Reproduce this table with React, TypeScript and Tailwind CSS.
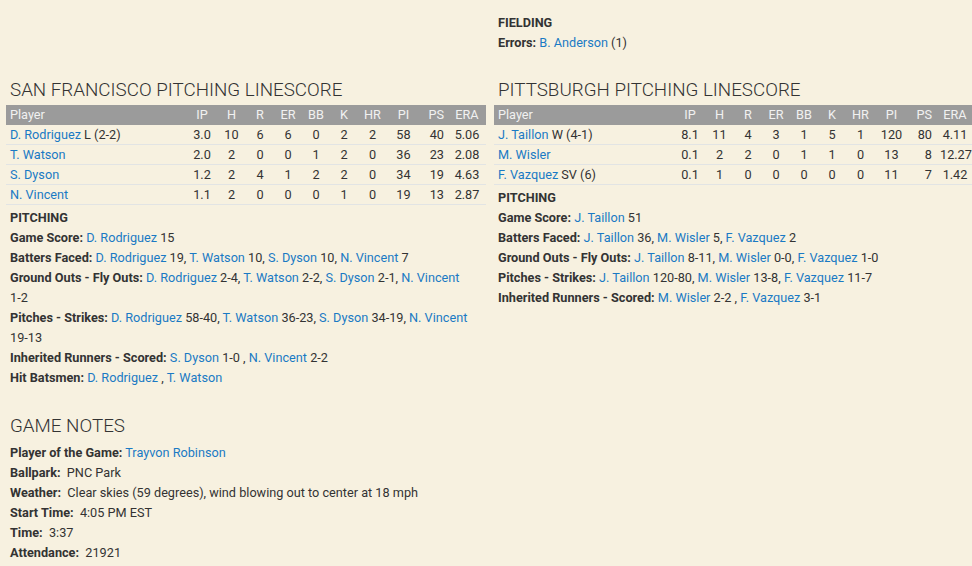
type Line = { name: string; extra?: string; stats: string[] };

const sfLines: Line[] = [
  { name: "D. Rodriguez", extra: "L (2-2)", stats: ["3.0", "10", "6", "6", "0", "2", "2", "58", "40", "5.06"] },
  { name: "T. Watson", stats: ["2.0", "2", "0", "0", "1", "2", "0", "36", "23", "2.08"] },
  { name: "S. Dyson", stats: ["1.2", "2", "4", "1", "2", "2", "0", "34", "19", "4.63"] },
  { name: "N. Vincent", stats: ["1.1", "2", "0", "0", "0", "1", "0", "19", "13", "2.87"] },
];

const pitLines: Line[] = [
  { name: "J. Taillon", extra: "W (4-1)", stats: ["8.1", "11", "4", "3", "1", "5", "1", "120", "80", "4.11"] },
  { name: "M. Wisler", stats: ["0.1", "2", "2", "0", "1", "1", "0", "13", "8", "12.27"] },
  { name: "F. Vazquez", extra: "SV (6)", stats: ["0.1", "1", "0", "0", "0", "0", "0", "11", "7", "1.42"] },
];

const cols = ["IP", "H", "R", "ER", "BB", "K", "HR", "PI", "PS", "ERA"];
const grid =
  "grid grid-cols-[181px_30px_29px_28px_28px_28px_28px_29px_33px_32px_34px] items-center";

function cellClass(i: number) {
  if (i === 8) return "text-right pr-[8px]";
  if (i === 9) return "text-center pr-[4px]";
  return "text-center";
}

function A({ children }: { children: React.ReactNode }) {
  return <a className="text-[#1a7ac4] cursor-pointer">{children}</a>;
}

function B({ children }: { children: React.ReactNode }) {
  return <span className="font-bold">{children}</span>;
}

// keeps "2-4" style values from breaking at the dash
function N({ children }: { children: React.ReactNode }) {
  return <span className="whitespace-nowrap">{children}</span>;
}

function Heading({ children, className = "" }: { children: React.ReactNode; className?: string }) {
  return (
    <h2 className={`text-[18.8px] leading-[24px] font-light text-[#333] pl-[4px] ${className}`}>
      {children}
    </h2>
  );
}

function Linescore({ lines }: { lines: Line[] }) {
  return (
    <div className="w-[480px]">
      <div className={`${grid} h-[20px] bg-[#9b9b9b] text-[#f1f1f1]`}>
        <div className="pl-[4px]">Player</div>
        {cols.map((c, i) => (
          <div key={c} className={cellClass(i)}>
            {c}
          </div>
        ))}
      </div>
      {lines.map((l) => (
        <div key={l.name} className={`${grid} h-[20px] border-b border-[#e2e4e4]`}>
          <div className="pl-[4px] whitespace-nowrap">
            <A>{l.name}</A>
            {l.extra ? ` ${l.extra}` : ""}
          </div>
          {l.stats.map((s, i) => (
            <div key={i} className={cellClass(i)}>
              {s}
            </div>
          ))}
        </div>
      ))}
    </div>
  );
}

export default function App() {
  return (
    <div
      className="w-[972px] h-[566px] overflow-hidden bg-[#f7f1e0] text-[#333] text-[12.7px] leading-[20px] px-[6px] pt-[13px]"
      style={{ fontFamily: "Roboto, 'Liberation Sans', sans-serif" }}
    >
      <div className="grid grid-cols-[480px_480px] gap-x-[8px]">
        <div />
        <div className="pl-[4px]">
          <div className="font-bold">FIELDING</div>
          <div>
            <B>Errors:</B> <A>B. Anderson</A> (1)
          </div>
        </div>
      </div>

      <div className="grid grid-cols-[480px_480px] gap-x-[8px] mt-[25px]">
        <div>
          <Heading className="mb-[3px]">SAN FRANCISCO PITCHING LINESCORE</Heading>
          <Linescore lines={sfLines} />
          <div className="pl-[4px] pr-[8px] pt-[3px]">
            <div className="font-bold">PITCHING</div>
            <div>
              <B>Game Score:</B> <A>D. Rodriguez</A> 15
            </div>
            <div>
              <B>Batters Faced:</B> <A>D. Rodriguez</A> 19, <A>T. Watson</A> 10, <A>S. Dyson</A> 10,{" "}
              <A>N. Vincent</A> 7
            </div>
            <div>
              <B>Ground Outs - Fly Outs:</B> <A>D. Rodriguez</A> <N>2-4,</N> <A>T. Watson</A> <N>2-2,</N>{" "}
              <A>S. Dyson</A> <N>2-1,</N> <A>N. Vincent</A> <N>1-2</N>
            </div>
            <div>
              <B>Pitches - Strikes:</B> <A>D. Rodriguez</A> <N>58-40,</N> <A>T. Watson</A> <N>36-23,</N>{" "}
              <A>S. Dyson</A> <N>34-19,</N> <A>N. Vincent</A> <N>19-13</N>
            </div>
            <div>
              <B>Inherited Runners - Scored:</B> <A>S. Dyson</A> <N>1-0</N> , <A>N. Vincent</A> <N>2-2</N>
            </div>
            <div>
              <B>Hit Batsmen:</B> <A>D. Rodriguez</A> , <A>T. Watson</A>
            </div>
          </div>

          <Heading className="mt-[26px] mb-[5px]">GAME NOTES</Heading>
          <div className="pl-[4px]">
            <div>
              <B>Player of the Game:</B> <A>Trayvon Robinson</A>
            </div>
            <div>
              <B>Ballpark:</B>{"\u00a0 "}PNC Park
            </div>
            <div>
              <B>Weather:</B>{"\u00a0 "}Clear skies (59 degrees), wind blowing out to center at 18 mph
            </div>
            <div>
              <B>Start Time:</B>{"\u00a0 "}4:05 PM EST
            </div>
            <div>
              <B>Time:</B>{"\u00a0 "}3:37
            </div>
            <div>
              <B>Attendance:</B>{"\u00a0 "}21921
            </div>
          </div>
        </div>

        <div>
          <Heading className="mb-[3px]">PITTSBURGH PITCHING LINESCORE</Heading>
          <Linescore lines={pitLines} />
          <div className="pl-[4px] pr-[8px] pt-[3px]">
            <div className="font-bold">PITCHING</div>
            <div>
              <B>Game Score:</B> <A>J. Taillon</A> 51
            </div>
            <div>
              <B>Batters Faced:</B> <A>J. Taillon</A> 36, <A>M. Wisler</A> 5, <A>F. Vazquez</A> 2
            </div>
            <div>
              <B>Ground Outs - Fly Outs:</B> <A>J. Taillon</A> <N>8-11,</N> <A>M. Wisler</A> <N>0-0,</N>{" "}
              <A>F. Vazquez</A> <N>1-0</N>
            </div>
            <div>
              <B>Pitches - Strikes:</B> <A>J. Taillon</A> <N>120-80,</N> <A>M. Wisler</A> <N>13-8,</N>{" "}
              <A>F. Vazquez</A> <N>11-7</N>
            </div>
            <div>
              <B>Inherited Runners - Scored:</B> <A>M. Wisler</A> <N>2-2</N> , <A>F. Vazquez</A> <N>3-1</N>
            </div>
          </div>
        </div>
      </div>
    </div>
  );
}
